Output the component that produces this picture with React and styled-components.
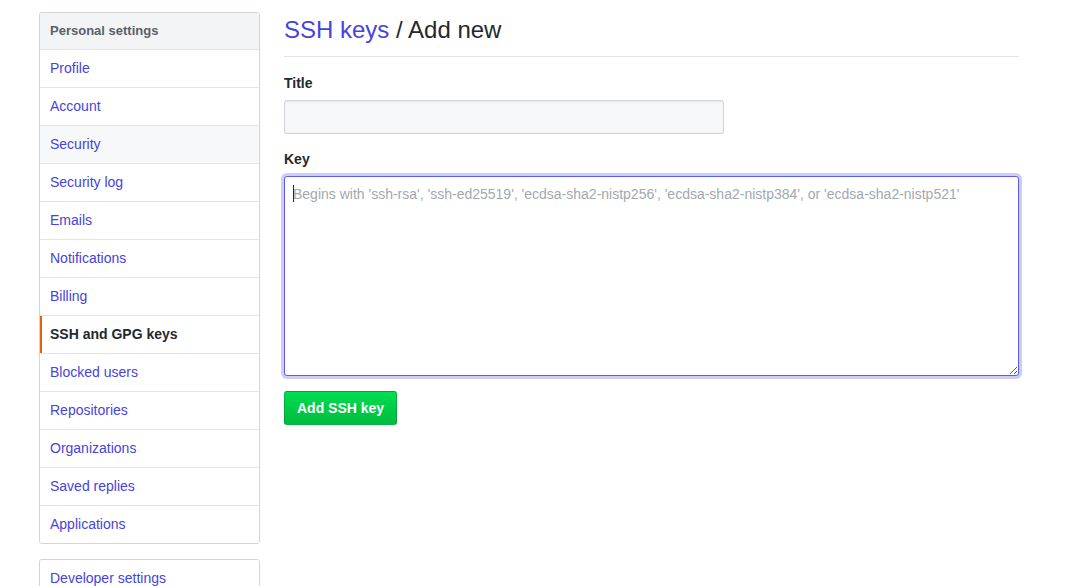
import styled, { createGlobalStyle } from "styled-components";

const GlobalStyle = createGlobalStyle`
  body {
    margin: 0;
    background: #fff;
    font-family: "Liberation Sans", Arial, sans-serif;
    font-size: 14px;
    line-height: 1.5;
    color: #24292e;
  }
  * { box-sizing: border-box; }
`

const Container = styled.div`
  display: flex;
  width: 980px;
  padding: 12px 0 0 39px;
  box-sizing: content-box;
`
const Sidebar = styled.div`
  width: 245px;
  padding-right: 24px;
  flex-shrink: 0;
`
const Menu = styled.nav`
  border: 1px solid #d1d5da;
  border-radius: 3px;
  margin-bottom: 15px;
  overflow: hidden;
`
const MenuHeading = styled.div`
  padding: 8px 10px;
  background: #f3f4f6;
  border-bottom: 1px solid #e1e4e8;
  font-size: 13px;
  font-weight: bold;
  line-height: 20px;
  color: #586069;
`
const MenuItem = styled.a`
  display: block;
  position: relative;
  padding: 8px 10px;
  line-height: 21px;
  color: ${p => (p.$selected ? "#24292e" : "#4643dd")};
  font-weight: ${p => (p.$selected ? "bold" : "normal")};
  background: ${p => (p.$hover ? "#f6f8fa" : "#fff")};
  border-bottom: ${p => (p.$last ? "none" : "1px solid #e1e4e8")};
  text-decoration: none;
  cursor: pointer;

  &::before {
    content: "";
    display: ${p => (p.$selected ? "block" : "none")};
    position: absolute;
    top: 0;
    bottom: 0;
    left: 0;
    width: 2px;
    background: #e36209;
  }
`
const Main = styled.div`
  width: 735px;
`
const Subhead = styled.div`
  padding-bottom: 8px;
  border-bottom: 1px solid #e1e4e8;
  margin-bottom: 16px;
`
const Title = styled.h2`
  margin: 0;
  font-size: 24px;
  font-weight: normal;
  line-height: 36px;
`
const Crumb = styled.a`
  color: #4643dd;
  text-decoration: none;
`
const FormGroup = styled.div`
  margin-bottom: 15px;
`
const Label = styled.label`
  display: block;
  font-weight: bold;
  line-height: 21px;
  margin-bottom: 6px;
`
const Input = styled.input`
  display: block;
  width: 440px;
  height: 34px;
  padding: 6px 8px;
  font: inherit;
  background: #f6f8fa;
  border: 1px solid #d1d5da;
  border-radius: 3px;
  box-shadow: inset 0 1px 2px rgba(27, 31, 35, 0.075);
  outline: none;
`
const AreaWrap = styled.div`
  position: relative;
`
const TextArea = styled.textarea`
  display: block;
  width: 735px;
  height: 200px;
  padding: 7px 8px;
  font-family: "Liberation Sans", Arial, sans-serif;
  font-size: 14px;
  line-height: 20px;
  border: 1px solid #5a5af0;
  border-radius: 3px;
  box-shadow: 0 0 0 3px rgba(90, 90, 240, 0.3);
  outline: none;
  resize: vertical;
  caret-color: transparent;

  &::placeholder {
    color: #a3a8ae;
  }
`
// text caret drawn over the empty, focused field
const Caret = styled.span`
  position: absolute;
  left: 9px;
  top: 9px;
  width: 1px;
  height: 17px;
  background: #24292e;
  pointer-events: none;
`
const Button = styled.button`
  height: 34px;
  padding: 6px 12px;
  font-family: "Liberation Sans", Arial, sans-serif;
  font-size: 14px;
  font-weight: bold;
  line-height: 20px;
  color: #fff;
  background-image: linear-gradient(-180deg, #00de4f 0%, #00bf3f 90%);
  border: 1px solid rgba(27, 31, 35, 0.2);
  border-radius: 3px;
  cursor: pointer;
`

const items = [
  "Profile",
  "Account",
  "Security",
  "Security log",
  "Emails",
  "Notifications",
  "Billing",
  "SSH and GPG keys",
  "Blocked users",
  "Repositories",
  "Organizations",
  "Saved replies",
  "Applications",
]

const App = () => {
  return (
    <Container>
      <GlobalStyle />
      <Sidebar>
        <Menu>
          <MenuHeading>Personal settings</MenuHeading>
          {items.map((item, i) => (
            <MenuItem
              key={item}
              $selected={item === "SSH and GPG keys"}
              $hover={item === "Security"}
              $last={i === items.length - 1}
            >
              {item}
            </MenuItem>
          ))}
        </Menu>
        <Menu>
          <MenuItem $last>Developer settings</MenuItem>
        </Menu>
      </Sidebar>
      <Main>
        <Subhead>
          <Title>
            <Crumb>SSH keys</Crumb> / Add new
          </Title>
        </Subhead>
        <FormGroup>
          <Label>Title</Label>
          <Input type="text" />
        </FormGroup>
        <FormGroup>
          <Label>Key</Label>
          <AreaWrap>
            <TextArea
              autoFocus
              placeholder="Begins with 'ssh-rsa', 'ssh-ed25519', 'ecdsa-sha2-nistp256', 'ecdsa-sha2-nistp384', or 'ecdsa-sha2-nistp521'"
            />
            <Caret />
          </AreaWrap>
        </FormGroup>
        <Button>Add SSH key</Button>
      </Main>
    </Container>
  )
}

export default App
